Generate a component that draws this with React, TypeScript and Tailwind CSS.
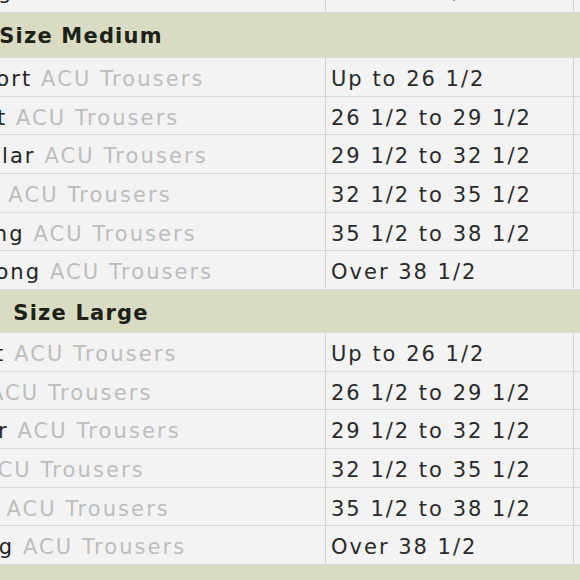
import React from "react";

const LENGTHS = ["X-Short", "Short", "Regular", "Long", "X-Long", "XX-Long"];
const INSEAMS = [
  "Up to 26 1/2",
  "26 1/2 to 29 1/2",
  "29 1/2 to 32 1/2",
  "32 1/2 to 35 1/2",
  "35 1/2 to 38 1/2",
  "Over 38 1/2",
];

function Row({ size, length, inseam, top }: { size: string; length: string; inseam: string; top?: boolean }) {
  const pad = top ? "pt-[6px]" : "pt-[9px]";
  return (
    <div className="flex h-[38.67px] shrink-0 border-b border-[#d9d9d9] bg-[#f3f3f3]">
      <div className={"w-[496px] shrink-0 border-r border-[#d2d2d2] pl-[5px] whitespace-nowrap overflow-hidden tracking-[2.1px] leading-[24px] " + pad}>
        <span className="text-[#242424]">
          {size} {length}
        </span>
        <span className="text-[#bdbdbd]"> ACU Trousers</span>
      </div>
      <div className={"w-[248px] shrink-0 border-r border-[#d2d2d2] pl-[5px] whitespace-nowrap tracking-[2px] leading-[24px] text-[#2a2a2a] " + pad}>
        {inseam}
      </div>
      <div className="flex-1" />
    </div>
  );
}

function Header({ size, tall, last }: { size: string; tall?: boolean; last?: boolean }) {
  return (
    <div
      className={
        tall
          ? "flex h-[45px] shrink-0 border-b border-[#d9d9d9] bg-[#d9dcc2]"
          : "flex h-[43px] shrink-0 border-b border-[#d9d9d9] bg-[#d9dcc2]"
      }
    >
      <div
        className={
          "w-[502px] shrink-0 flex justify-center font-bold tracking-[1.2px] leading-[24px] text-[#1d2117] whitespace-nowrap " +
          (last ? "pt-[13px]" : "pt-[11px]")
        }
      >
        Size {size}
      </div>
    </div>
  );
}

export default function App() {
  return (
    <div className="w-[580px] h-[580px] overflow-hidden bg-[#f3f3f3] text-[21px] font-['DejaVu_Sans',Verdana,sans-serif]">
      <div className="-ml-[170px] w-[780px] flex flex-col -mt-[25.67px]">
        <Row size="Small" length="XX-Long" inseam="Over 38 1/2" top />
        <Header size="Medium" tall />
        {LENGTHS.map((l, i) => (
          <Row key={"m" + l} size="Medium" length={l} inseam={INSEAMS[i]} />
        ))}
        <Header size="Large" />
        {LENGTHS.map((l, i) => (
          <Row key={"l" + l} size="Large" length={l} inseam={INSEAMS[i]} />
        ))}
        <Header size="X-Large" tall last />
      </div>
    </div>
  );
}
